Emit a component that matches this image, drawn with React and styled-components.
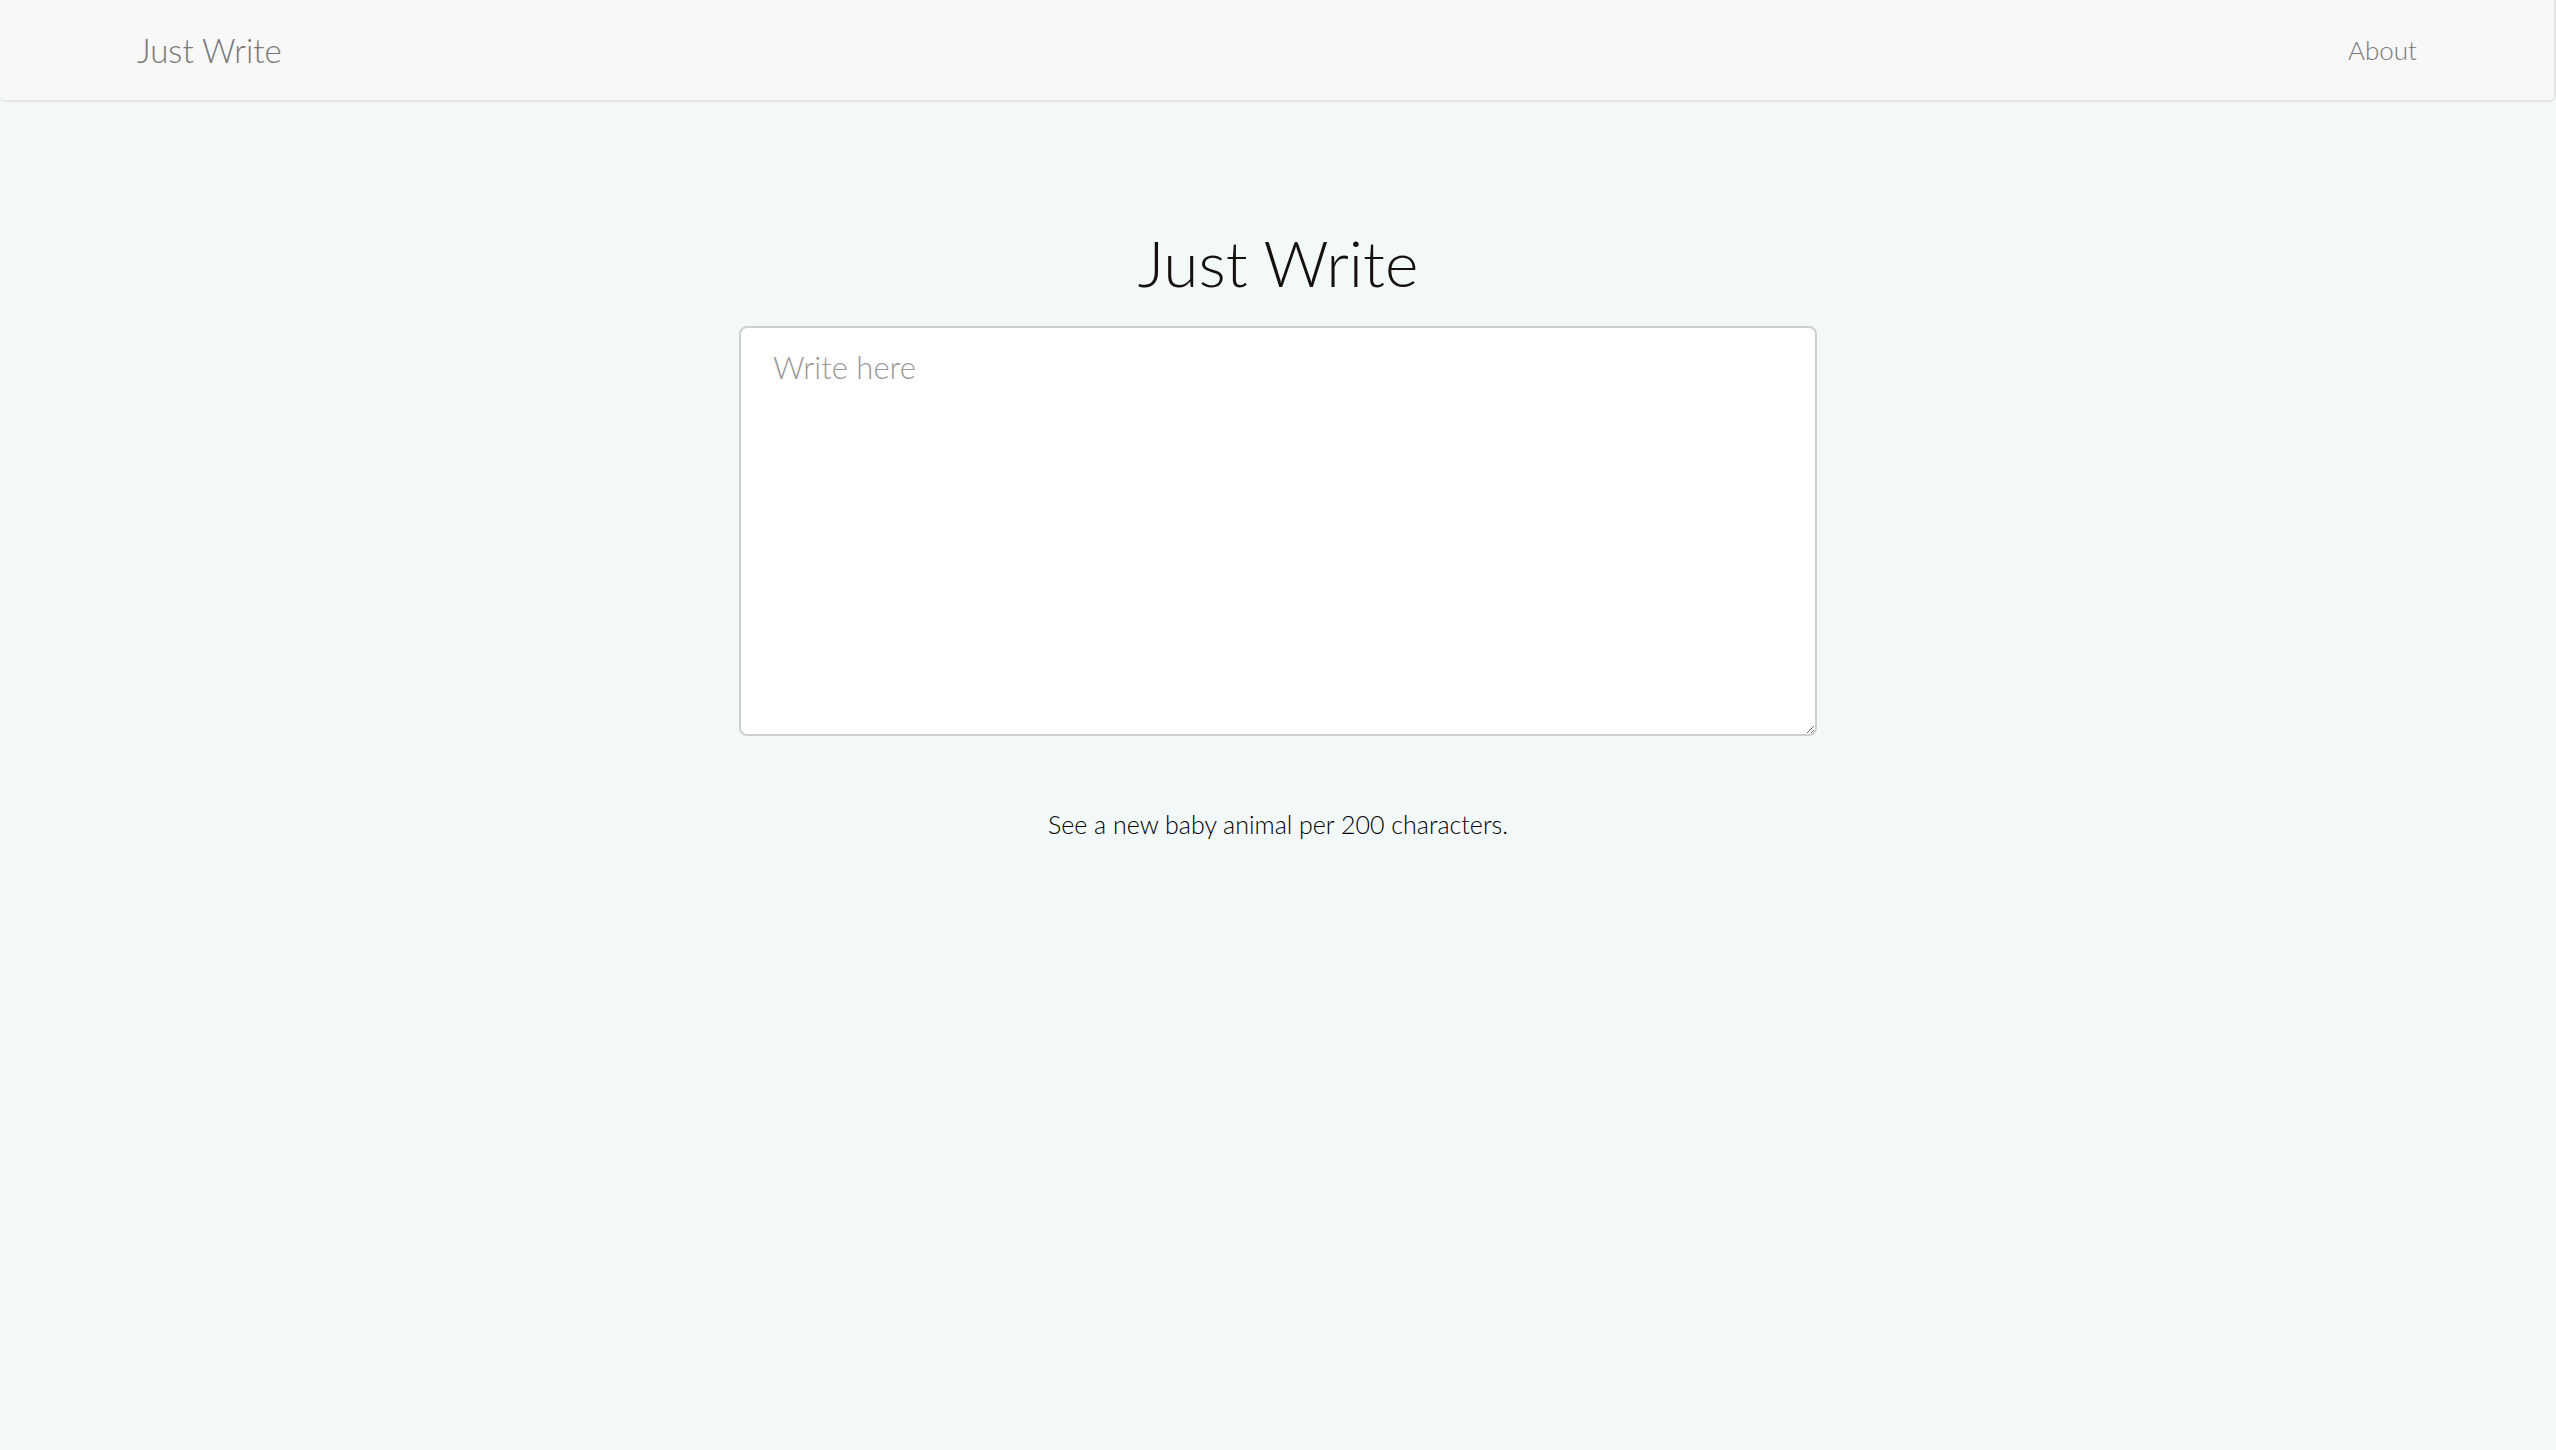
import React, { useState } from 'react';
import styled, { createGlobalStyle } from 'styled-components';

const GlobalStyle = createGlobalStyle`
  html, body {
    margin: 0;
    padding: 0;
    background-color: #f3f8f8;
    font-family: Lato, "Open Sans", sans-serif;
    font-weight: 300;
  }
`;

const Navbar = styled.nav`
  height: 102px;
  box-sizing: border-box;
  display: flex;
  align-items: center;
  justify-content: space-between;
  padding: 0 137px 0 137px;
  background-color: #f8f8f8;
  border: 2px solid #e5e5e5;
  border-top: none;
  border-left: none;
  border-radius: 0 0 6px 6px;
`;

const Brand = styled.a`
  font-size: 33px;
  color: #777;
  text-decoration: none;
`;

const NavLink = styled.a`
  font-size: 26px;
  color: #777;
  text-decoration: none;
  cursor: pointer;
`;

const Main = styled.main`
  display: flex;
  flex-direction: column;
  align-items: center;
  padding-top: 119px;
`;

const Title = styled.h1`
  margin: 0 0 21px;
  font-size: 64px;
  font-weight: 300;
  line-height: 84px;
  color: #15110d;
`;

const WriteArea = styled.textarea`
  width: 1078px;
  height: 410px;
  box-sizing: border-box;
  padding: 20px 32px;
  border: 2px solid #cfcfcf;
  border-radius: 8px;
  background: #fff;
  font-family: inherit;
  font-weight: 300;
  font-size: 31px;
  color: #333;
  outline: none;
  &::placeholder {
    color: #999;
  }
`;

const Caption = styled.p`
  margin: 73px 0 0;
  font-size: 25px;
  font-weight: 300;
  color: #000;
`;

const App = () => {
  const [text, setText] = useState('');

  return (
    <>
      <GlobalStyle />
      <Navbar>
        <Brand>Just Write</Brand>
        <NavLink>About</NavLink>
      </Navbar>
      <Main>
        <Title>Just Write</Title>
        <WriteArea
          placeholder="Write here"
          value={text}
          onChange={(e) => setText(e.target.value)}
        />
        <Caption>See a new baby animal per 200 characters.</Caption>
      </Main>
    </>
  );
};

export default App;
